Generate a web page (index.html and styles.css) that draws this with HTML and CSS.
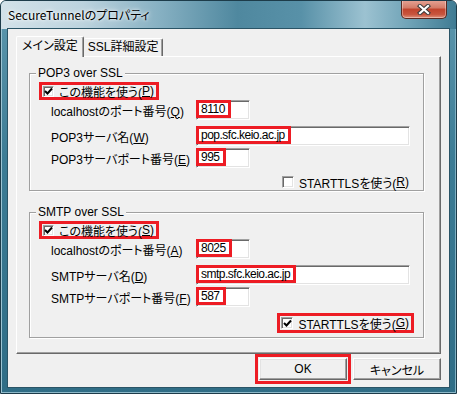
FILE: index.html
```html
<!DOCTYPE html>
<html lang="ja">
<head>
  <meta charset="UTF-8">
  <title>SecureTunnelのプロパティ</title>
  <link rel="stylesheet" href="styles.css">
</head>
<body>
  <div class="window">
    <!-- Title bar -->
    <div class="titlebar">
      <span class="title">SecureTunnelのプロパティ</span>
      <button type="button" class="close">
        <svg width="14" height="11" viewBox="0 0 14 11">
          <path d="M3 2 L11 9 M11 2 L3 9" stroke="#3a3a3a" stroke-width="4.2" stroke-linecap="square"/>
          <path d="M3 2 L11 9 M11 2 L3 9" stroke="#fff" stroke-width="2.2" stroke-linecap="square"/>
        </svg>
      </button>
    </div>

    <div class="client">
      <!-- Tabs -->
      <div class="tabs">
        <div class="tab active">メイン設定</div>
        <div class="tab">SSL詳細設定</div>
      </div>

      <div class="panel">
        <!-- POP3 -->
        <div class="group group-pop">
          <div class="group-title">POP3 over SSL</div>
          <div class="check-row">
            <span class="mark"><span class="checkbox checked"><svg width="9" height="9" viewBox="0 0 9 9"><path d="M1 4 L3.5 6.5 L8 1.5" fill="none" stroke="#000" stroke-width="2"/></svg></span>この機能を使う(<u>P</u>)</span>
          </div>
          <div class="field">
            <label>localhostのポート番号(<u>Q</u>)</label>
            <div class="edit short"><span class="mark">8110</span></div>
          </div>
          <div class="field gap">
            <label>POP3サーバ名(<u>W</u>)</label>
            <div class="edit long"><span class="mark">pop.sfc.keio.ac.jp</span></div>
          </div>
          <div class="field">
            <label>POP3サーバポート番号(<u>E</u>)</label>
            <div class="edit short"><span class="mark">995</span></div>
          </div>
          <div class="tls-row">
            <span class="mark blank"><span class="checkbox"></span>STARTTLSを使う(<u>R</u>)</span>
          </div>
        </div>

        <!-- SMTP -->
        <div class="group group-smtp">
          <div class="group-title">SMTP over SSL</div>
          <div class="check-row">
            <span class="mark"><span class="checkbox checked"><svg width="9" height="9" viewBox="0 0 9 9"><path d="M1 4 L3.5 6.5 L8 1.5" fill="none" stroke="#000" stroke-width="2"/></svg></span>この機能を使う(<u>S</u>)</span>
          </div>
          <div class="field">
            <label>localhostのポート番号(<u>A</u>)</label>
            <div class="edit short"><span class="mark">8025</span></div>
          </div>
          <div class="field gap">
            <label>SMTPサーバ名(<u>D</u>)</label>
            <div class="edit long"><span class="mark">smtp.sfc.keio.ac.jp</span></div>
          </div>
          <div class="field">
            <label>SMTPサーバポート番号(<u>F</u>)</label>
            <div class="edit short"><span class="mark">587</span></div>
          </div>
          <div class="tls-row">
            <span class="mark"><span class="checkbox checked"><svg width="9" height="9" viewBox="0 0 9 9"><path d="M1 4 L3.5 6.5 L8 1.5" fill="none" stroke="#000" stroke-width="2"/></svg></span>STARTTLSを使う(<u>G</u>)</span>
          </div>
        </div>
      </div>

      <!-- Dialog buttons -->
      <div class="buttons">
        <span class="mark btn-mark"><button type="button" class="btn default">OK</button></span>
        <button type="button" class="btn">キャンセル</button>
      </div>
    </div>
  </div>
</body>
</html>
```

FILE: styles.css
```css
/* Windows 7 style property dialog */
body {
  margin: 0;
  background: #fff;
  font-family: "Liberation Sans", "Noto Sans CJK JP", sans-serif;
  font-size: 12px;
  font-feature-settings: "palt";
  color: #000;
}

.window {
  width: 457px;
  height: 394px;
  box-sizing: border-box;
  display: flex;
  flex-direction: column;
  border: 1px solid #1d3c4a;
  border-radius: 6px 6px 0 0;
  background: linear-gradient(180deg, #5e98ae 0%, #3c7c95 40%, #2f6d86 100%);
  box-shadow: inset 1px 0 0 #9cc4d3, inset -1px 0 0 #7fb0c3, inset 0 -1px 0 #8cb8c8;
  overflow: hidden;
}

.titlebar {
  height: 28px;
  flex: none;
  display: flex;
  justify-content: space-between;
  align-items: flex-start;
  padding-left: 7px;
  padding-right: 9px;
  background: linear-gradient(90deg, #d3e2e9 0%, #bcd3de 18%, #86b0c2 35%, #4f889f 52%, #5891a8 66%, #9cc2d1 80%, #6ea2b6 90%, #3f7b93 100%);
}

.title {
  margin-top: 6px;
  font-family: "Noto Sans CJK JP", sans-serif;
  font-size: 12px;
  line-height: 16px;
  text-shadow: 0 0 6px #fff, 0 0 3px #fff;
}

.close {
  width: 46px;
  height: 19px;
  margin-top: -1px;
  padding: 0;
  display: flex;
  align-items: center;
  justify-content: center;
  border: 1px solid #5a2a22;
  border-top: none;
  border-radius: 0 0 5px 5px;
  background: linear-gradient(180deg, #e6a597 0%, #d37a66 45%, #c1432c 50%, #c8553e 80%, #e0927d 100%);
  box-shadow: inset 0 0 0 1px rgba(255, 255, 255, 0.35);
}

.client {
  flex: 1;
  margin: 0 7px 6px;
  padding: 7px 8px 0;
  display: flex;
  flex-direction: column;
  background: #f0f0f0;
  box-shadow: 0 0 0 1px #2a5466;
}

/* Tabs */
.tabs {
  height: 20px;
  display: flex;
  align-items: flex-end;
}

.tab {
  height: 18px;
  box-sizing: border-box;
  padding: 0 4px;
  line-height: 17px;
  background: #f0f0f0;
  border-top: 1px solid #fff;
  border-right: 1px solid #696969;
  box-shadow: inset -1px 0 0 #a0a0a0;
  border-radius: 2px 2px 0 0;
}

.tab.active {
  position: relative;
  z-index: 1;
  height: 21px;
  margin-bottom: -1px;
  padding: 0 5px 0 5px;
  line-height: 18px;
  border-left: 1px solid #fff;
}

.panel {
  height: 298px;
  box-sizing: border-box;
  padding: 16px 0 0 12px;
  border-top: 1px solid #fff;
  border-left: 1px solid #fff;
  border-right: 1px solid #696969;
  border-bottom: 1px solid #696969;
  box-shadow: inset -1px -1px 0 #a0a0a0;
}

/* Group boxes */
.group {
  width: 395px;
  box-sizing: border-box;
  border: 1px solid #a0a0a0;
  box-shadow: inset 1px 1px 0 #fff, 1px 1px 0 #fff;
}

.group-pop {
  height: 118px;
}

.group-smtp {
  height: 126px;
  margin-top: 21px;
}

.group-title {
  width: fit-content;
  margin: -8px 0 0 6px;
  padding: 0 2px;
  line-height: 14px;
  background: #f0f0f0;
}

.mark {
  display: inline-flex;
  align-items: center;
  box-sizing: border-box;
  border: 3px solid #ed1c24;
}

.mark.blank {
  border-color: transparent;
}

.check-row {
  margin-top: 2px;
  padding-left: 9px;
  display: flex;
}

.check-row .mark {
  height: 18px;
  padding: 0 2px 0 1px;
}

.checkbox {
  width: 11px;
  height: 11px;
  box-sizing: border-box;
  margin-right: 5px;
  display: inline-flex;
  align-items: center;
  justify-content: center;
  background: #fff;
  border-top: 1px solid #a0a0a0;
  border-left: 1px solid #a0a0a0;
  border-right: 1px solid #fff;
  border-bottom: 1px solid #fff;
  box-shadow: inset 1px 1px 0 #696969, inset -1px -1px 0 #e3e3e3;
}

.tls-row .checkbox {
  width: 12px;
  height: 12px;
}

.field {
  display: flex;
  align-items: center;
  height: 20px;
  padding-left: 21px;
}

.field.gap {
  margin: 6px 0 2px;
}

.field label {
  width: 145px;
}

.edit {
  height: 20px;
  box-sizing: border-box;
  display: flex;
  align-items: flex-start;
  background: #fff;
  border-top: 1px solid #a0a0a0;
  border-left: 1px solid #a0a0a0;
  border-right: 1px solid #fff;
  border-bottom: 1px solid #fff;
  box-shadow: inset 1px 1px 0 #696969, inset -1px -1px 0 #e3e3e3;
}

.edit.short {
  width: 54px;
}

.edit.long {
  width: 214px;
}

.edit .mark {
  height: 18px;
  margin: -1px 0 0 -1px;
  padding: 0 3px 0 2px;
  line-height: 12px;
  letter-spacing: -0.5px;
}

.tls-row {
  display: flex;
  justify-content: flex-end;
  margin-top: 4px;
  padding-right: 9px;
}

.group-smtp .tls-row {
  margin-top: 6px;
}

.tls-row .mark {
  height: 20px;
  padding: 0 2px 0 1px;
}

/* Dialog buttons */
.buttons {
  display: flex;
  justify-content: flex-end;
  align-items: center;
  gap: 2px;
  margin-top: 0;
}

.btn-mark {
  padding: 1px;
}

.btn {
  width: 88px;
  height: 22px;
  padding: 0;
  font-family: "Liberation Sans", "Noto Sans CJK JP", sans-serif;
  font-size: 12px;
  font-feature-settings: "palt";
  background: #f0f0f0;
  border-top: 1px solid #fff;
  border-left: 1px solid #fff;
  border-right: 1px solid #696969;
  border-bottom: 1px solid #696969;
  box-shadow: inset -1px -1px 0 #a0a0a0, inset 1px 1px 0 #e3e3e3;
}

.btn.default {
  outline: none;
}
```
